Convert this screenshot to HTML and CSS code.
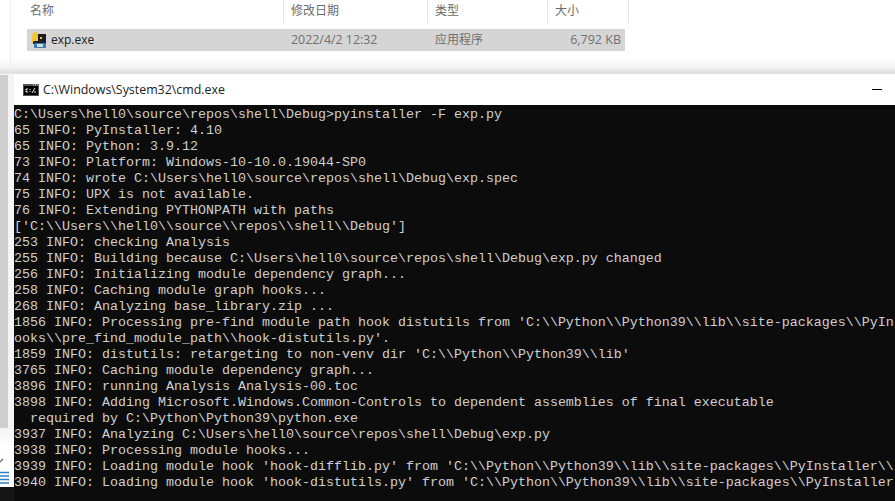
FILE: index.html
```html
<!DOCTYPE html>
<html lang="zh">
<head>
<meta charset="utf-8">
<title>cmd.exe</title>
<link rel="stylesheet" href="styles.css">
</head>
<body>
<section class="explorer">
  <div class="gutter"></div>
  <div class="files">
    <div class="cols head">
      <div class="col c-name">名称</div>
      <div class="col c-date">修改日期</div>
      <div class="col c-type">类型</div>
      <div class="col c-size">大小</div>
    </div>
    <div class="cols row">
      <div class="col c-name file">
        <svg class="file-icon" width="16" height="16" viewBox="0 0 16 16">
          <rect x="2" y="2" width="13" height="10" fill="#1c1c24"/>
          <rect x="3" y="11" width="12" height="5" rx="1" fill="#3d7bb0"/>
          <rect x="6" y="12" width="6" height="3" fill="#cfd8e0"/>
          <path d="M1 4 C1 1 3 0 5 0 C7 0 7 2 7 3 L7 9 L4 9 C2 9 1 11 1 12 Z" fill="#f2c53d"/>
          <rect x="9" y="5" width="2" height="2" fill="#f2c53d"/>
        </svg>
        <span class="file-name">exp.exe</span>
      </div>
      <div class="col c-date">2022/4/2 12:32</div>
      <div class="col c-type">应用程序</div>
      <div class="col c-size num">6,792 KB</div>
    </div>
  </div>
</section>
<main class="desk">
  <aside class="rail">
    <div class="thumb"></div>
    <div class="rail-tools">
      <svg class="chev" width="8" height="8" viewBox="0 0 8 8"><path d="M0 6 L4 2" stroke="#555" stroke-width="1.2" fill="none"/></svg>
      <svg class="list" width="9" height="14" viewBox="0 0 9 14"><path d="M0 1.5H9M0 5H9M0 8.5H9M0 12H9" stroke="#2f7fc4" stroke-width="1.4"/></svg>
    </div>
    <div class="rail-end"></div>
  </aside>
  <div class="window">
    <header class="titlebar">
      <svg class="cmd-icon" width="16" height="12" viewBox="0 0 16 12">
        <rect width="16" height="12" fill="#555"/>
        <rect x="1" y="2" width="14" height="9" fill="#000"/>
        <rect x="10" y="0.5" width="1" height="1" fill="#ddd"/><rect x="12" y="0.5" width="1" height="1" fill="#ddd"/><rect x="14" y="0.5" width="1" height="1" fill="#ddd"/>
        <path d="M5 5H3V8H5M7 5V6M7 7V8M12 4L9 9M13 8H11" stroke="#eee" stroke-width="1" fill="none"/>
      </svg>
      <span class="title">C:\Windows\System32\cmd.exe</span>
      <span class="minimize"></span>
    </header>
    <pre class="console">C:\Users\hell0\source\repos\shell\Debug&gt;pyinstaller -F exp.py
65 INFO: PyInstaller: 4.10
65 INFO: Python: 3.9.12
73 INFO: Platform: Windows-10-10.0.19044-SP0
74 INFO: wrote C:\Users\hell0\source\repos\shell\Debug\exp.spec
75 INFO: UPX is not available.
76 INFO: Extending PYTHONPATH with paths
['C:\\Users\\hell0\\source\\repos\\shell\\Debug']
253 INFO: checking Analysis
255 INFO: Building because C:\Users\hell0\source\repos\shell\Debug\exp.py changed
256 INFO: Initializing module dependency graph...
258 INFO: Caching module graph hooks...
268 INFO: Analyzing base_library.zip ...
1856 INFO: Processing pre-find module path hook distutils from 'C:\\Python\\Python39\\lib\\site-packages\\PyIn
ooks\\pre_find_module_path\\hook-distutils.py'.
1859 INFO: distutils: retargeting to non-venv dir 'C:\\Python\\Python39\\lib'
3765 INFO: Caching module dependency graph...
3896 INFO: running Analysis Analysis-00.toc
3898 INFO: Adding Microsoft.Windows.Common-Controls to dependent assemblies of final executable
  required by C:\Python\Python39\python.exe
3937 INFO: Analyzing C:\Users\hell0\source\repos\shell\Debug\exp.py
3938 INFO: Processing module hooks...
3939 INFO: Loading module hook 'hook-difflib.py' from 'C:\\Python\\Python39\\lib\\site-packages\\PyInstaller\\
3940 INFO: Loading module hook 'hook-distutils.py' from 'C:\\Python\\Python39\\lib\\site-packages\\PyInstaller</pre>
  </div>
</main>
</body>
</html>
```
FILE: styles.css
```css
* { box-sizing: border-box; }
html, body { margin: 0; padding: 0; }
body {
  width: 895px;
  height: 501px;
  overflow: hidden;
  background: #fff;
  display: flex;
  flex-direction: column;
  font-family: "Noto Sans CJK SC", "Open Sans", sans-serif;
}
.explorer {
  height: 74px;
  display: flex;
  background: linear-gradient(to bottom, #fff 0, #fff 56px, #f9f9f9 62px, #f1f1f1 68px, #dcdcdc 73px, #e8e8e8 74px);
}
.gutter {
  width: 11px;
  border-right: 1px solid #ededed;
}
.files {
  margin-left: 16px;
  width: 602px;
}
.cols { display: flex; }
.col { font-size: 12px; }
.c-name { width: 257px; padding-left: 3px; }
.c-date { width: 144px; padding-left: 7px; }
.c-type { width: 120px; padding-left: 7px; }
.c-size { width: 81px; padding-left: 7px; }
.head { height: 23px; color: #6b6b6b; line-height: 19px; }
.head .col { border-right: 1px solid #e5e5e5; }
.row {
  margin-top: 6px;
  height: 22px;
  width: 598px;
  background: #d5d5d5;
  align-items: center;
  color: #707070;
  font-family: "Open Sans", "Noto Sans CJK SC", sans-serif;
}
.row .col { line-height: 22px; }
.file { display: flex; align-items: center; gap: 4px; padding-left: 4px; }
.file-name { color: #222; font-size: 12px; }
.row .num { text-align: right; padding-right: 4px; padding-left: 0; width: 77px; font-size: 12.5px; }
.row .c-date { font-size: 12.4px; }
.desk {
  flex: 1;
  display: flex;
  min-height: 0;
}
.rail {
  width: 14px;
  display: flex;
  flex-direction: column;
  background: #f4f4f4;
}
.thumb {
  height: 353px;
  margin-top: 1px;
  width: 8px;
  flex: none;
  background: #cfcfcf;
}
.rail-tools {
  flex: 1;
  display: flex;
  flex-direction: column;
  align-items: flex-start;
  justify-content: flex-end;
  gap: 6px;
  padding-bottom: 2px;
  background: linear-gradient(to bottom, #f4f4f4 0, #fff 20px);
}
.chev { margin-left: -1px; }
.rail-end { height: 14px; flex: none; background: #151515; }
.window {
  flex: 1;
  min-width: 0;
  display: flex;
  flex-direction: column;
}
.titlebar {
  height: 31px;
  flex: none;
  display: flex;
  align-items: center;
  background: #fff;
  padding-left: 9px;
  padding-right: 13px;
}
.title {
  margin-left: 4px;
  font-family: "Open Sans", sans-serif;
  font-size: 12.4px;
  color: #222;
  flex: 1;
}
.minimize {
  width: 10px;
  height: 1px;
  background: #000;
  box-shadow: 0 0 0.5px #000;
}
.console {
  flex: 1;
  margin: 0;
  padding-top: 2px;
  background: #0c0c0c;
  color: #cfcfcf;
  font-family: "Liberation Mono", monospace;
  font-size: 13.333px;
  line-height: 16px;
  white-space: pre;
  overflow: hidden;
}
```
